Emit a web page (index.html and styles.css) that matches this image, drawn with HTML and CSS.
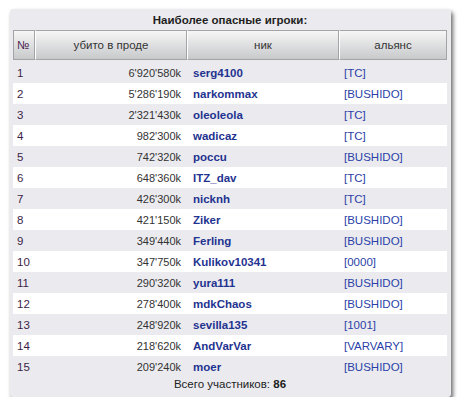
FILE: index.html
```html
<!DOCTYPE html>
<html>
<head>
<meta charset="utf-8">
<link rel="stylesheet" href="styles.css">
</head>
<body>
<div class="panel">
  <div class="title">Наиболее опасные игроки:</div>
  <table class="players">
    <colgroup>
      <col class="c-num"><col class="c-kills"><col class="c-nick"><col class="c-ally">
    </colgroup>
    <thead>
      <tr>
        <th class="h-num">№</th>
        <th>убито в проде</th>
        <th>ник</th>
        <th>альянс</th>
      </tr>
    </thead>
    <tbody>
      <tr><td class="num">1</td><td class="kills">6'920'580k</td><td class="nick">serg4100</td><td class="ally">[TC]</td></tr>
      <tr><td class="num">2</td><td class="kills">5'286'190k</td><td class="nick">narkommax</td><td class="ally">[BUSHIDO]</td></tr>
      <tr><td class="num">3</td><td class="kills">2'321'430k</td><td class="nick">oleoleola</td><td class="ally">[TC]</td></tr>
      <tr><td class="num">4</td><td class="kills">982'300k</td><td class="nick">wadicaz</td><td class="ally">[TC]</td></tr>
      <tr><td class="num">5</td><td class="kills">742'320k</td><td class="nick">poccu</td><td class="ally">[BUSHIDO]</td></tr>
      <tr><td class="num">6</td><td class="kills">648'360k</td><td class="nick">ITZ_dav</td><td class="ally">[TC]</td></tr>
      <tr><td class="num">7</td><td class="kills">426'300k</td><td class="nick">nicknh</td><td class="ally">[TC]</td></tr>
      <tr><td class="num">8</td><td class="kills">421'150k</td><td class="nick">Ziker</td><td class="ally">[BUSHIDO]</td></tr>
      <tr><td class="num">9</td><td class="kills">349'440k</td><td class="nick">Ferling</td><td class="ally">[BUSHIDO]</td></tr>
      <tr><td class="num">10</td><td class="kills">347'750k</td><td class="nick">Kulikov10341</td><td class="ally">[0000]</td></tr>
      <tr><td class="num">11</td><td class="kills">290'320k</td><td class="nick">yura111</td><td class="ally">[BUSHIDO]</td></tr>
      <tr><td class="num">12</td><td class="kills">278'400k</td><td class="nick">mdkChaos</td><td class="ally">[BUSHIDO]</td></tr>
      <tr><td class="num">13</td><td class="kills">248'920k</td><td class="nick">sevilla135</td><td class="ally">[1001]</td></tr>
      <tr><td class="num">14</td><td class="kills">218'620k</td><td class="nick">AndVarVar</td><td class="ally">[VARVARY]</td></tr>
      <tr><td class="num">15</td><td class="kills">209'240k</td><td class="nick">moer</td><td class="ally">[BUSHIDO]</td></tr>
    </tbody>
  </table>
  <div class="total">Всего участников: <b>86</b></div>
</div>
</body>
</html>
```
FILE: styles.css
```css
body {
  margin: 0;
  background: #ffffff;
  font-family: "Liberation Sans", Arial, sans-serif;
  font-size: 11.5px;
  color: #333;
}
.panel {
  margin: 9px 0 0 10px;
  width: 441px;
  height: 388px;
  box-sizing: border-box;
  padding: 0 4px 0 3px;
  background: #ebebef;
  border-radius: 3px;
  box-shadow: 2px 3px 4px rgba(0, 0, 0, 0.6);
}
.title {
  height: 21px;
  line-height: 22px;
  text-align: center;
  font-weight: bold;
  color: #1e1e1e;
}
.players {
  width: 434px;
  border-collapse: separate;
  border-spacing: 0;
  table-layout: fixed;
}
.c-num { width: 22px; }
.c-kills { width: 152px; }
.c-nick { width: 152px; }
.c-ally { width: 108px; }
.players th {
  box-sizing: border-box;
  height: 30px;
  padding: 0;
  font-weight: normal;
  color: #333;
  background: linear-gradient(#f6f6f6, #c8c9cb);
  border-top: 1px solid #a3a4a6;
  border-bottom: 1px solid #a3a4a6;
  border-left: 1px solid #ffffff;
  border-right: 1px solid #a3a4a6;
  text-align: center;
}
.players th.h-num {
  border-left: 1px solid #a3a4a6;
  text-align: left;
  padding-left: 3px;
  color: #4a1c55;
}
.players td {
  box-sizing: border-box;
  height: 21px;
  padding: 0;
  white-space: nowrap;
}
.players tbody tr:first-child td {
  height: 23px;
  border-top: 2px solid transparent;
}
.players tbody tr:nth-child(even) td { background: #ffffff; }
.players td.num {
  padding-left: 4px;
  color: #3c1e48;
}
.players td.kills {
  text-align: right;
  padding-right: 6px;
  color: #333;
  font-size: 11px;
}
.players td.nick {
  padding-left: 6px;
  font-weight: bold;
  color: #1f3390;
}
.players td.ally {
  padding-left: 5px;
  color: #2a3fa8;
}
.total {
  text-align: center;
  height: 14px;
  line-height: 14px;
  color: #222;
}
```
